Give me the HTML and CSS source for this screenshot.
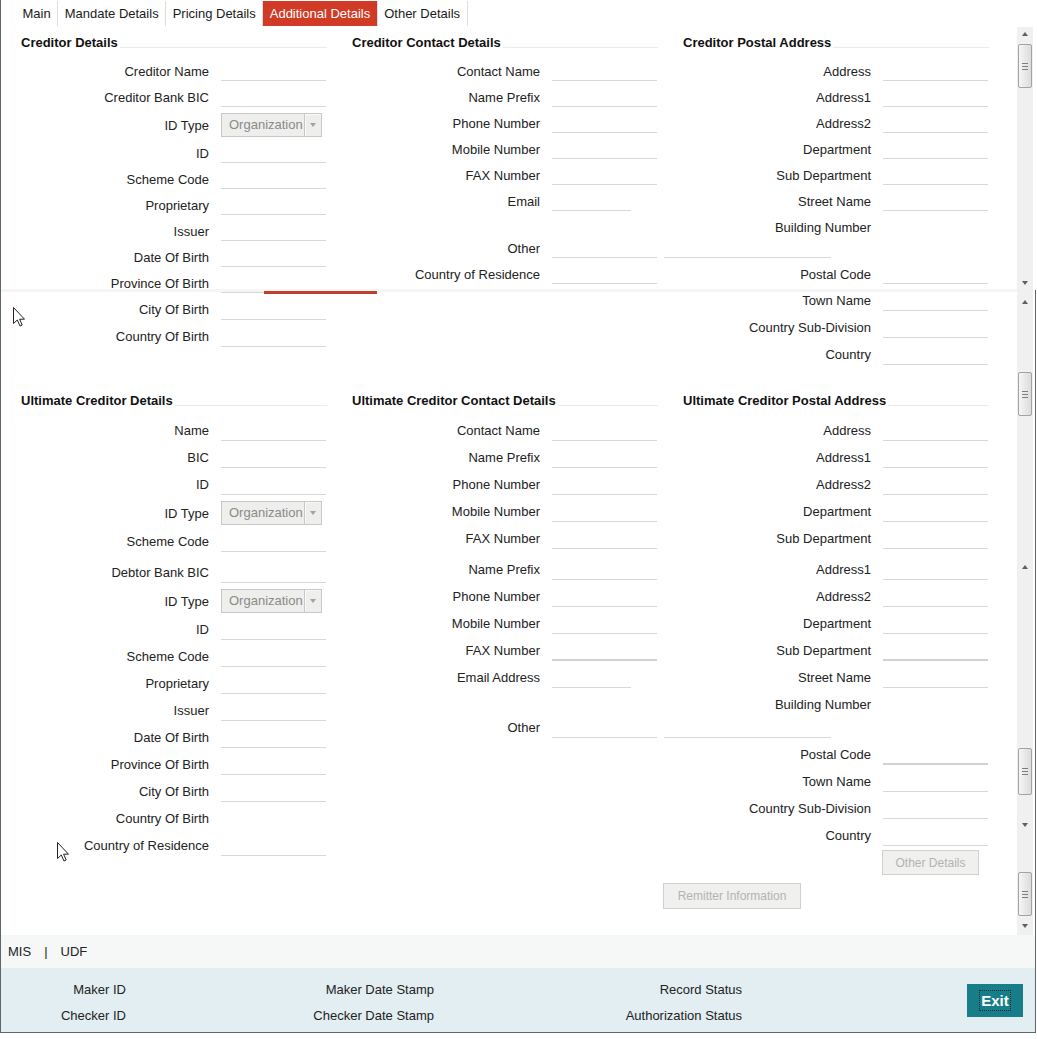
FILE: index.html
```html
<!DOCTYPE html>
<html lang="en">

<head>
    <meta charset="UTF-8">
    <title>Additional Details</title>
    <link rel="stylesheet" href="styles.css">
</head>

<body>
    <div class="screen">
        <ul class="tabs">
            <li>Main</li>
            <li>Mandate Details</li>
            <li>Pricing Details</li>
            <li class="active">Additional Details</li>
            <li>Other Details</li>
        </ul>

        <div class="workspace">
            <div class="form">
                <!-- creditor -->
                <section class="group">
                    <div class="col">
                        <div class="heading">Creditor Details</div>
                        <div class="field"><label>Creditor Name</label><input type="text"></div>
                        <div class="field"><label>Creditor Bank BIC</label><input type="text"></div>
                        <div class="field tall"><label>ID Type</label>
                            <div class="select"><span>Organization</span><i></i></div>
                        </div>
                        <div class="field"><label>ID</label><input type="text"></div>
                        <div class="field"><label>Scheme Code</label><input type="text"></div>
                        <div class="field"><label>Proprietary</label><input type="text"></div>
                        <div class="field"><label>Issuer</label><input type="text"></div>
                        <div class="field"><label>Date Of Birth</label><input type="text"></div>
                        <div class="field"><label>Province Of Birth</label><input type="text"></div>
                        <div class="field loose"><label>City Of Birth</label><input type="text"></div>
                        <div class="field loose"><label>Country Of Birth</label><input type="text"></div>
                    </div>
                    <div class="col">
                        <div class="heading">Creditor Contact Details</div>
                        <div class="field"><label>Contact Name</label><input type="text"></div>
                        <div class="field"><label>Name Prefix</label><input type="text"></div>
                        <div class="field"><label>Phone Number</label><input type="text"></div>
                        <div class="field"><label>Mobile Number</label><input type="text"></div>
                        <div class="field"><label>FAX Number</label><input type="text"></div>
                        <div class="field"><label>Email</label><input type="text" class="short"></div>
                        <div class="field gap"><label>Other</label><input type="text"><input type="text" class="long"></div>
                        <div class="field"><label>Country of Residence</label><input type="text"></div>
                    </div>
                    <div class="col">
                        <div class="heading">Creditor Postal Address</div>
                        <div class="field"><label>Address</label><input type="text"></div>
                        <div class="field"><label>Address1</label><input type="text"></div>
                        <div class="field"><label>Address2</label><input type="text"></div>
                        <div class="field"><label>Department</label><input type="text"></div>
                        <div class="field"><label>Sub Department</label><input type="text"></div>
                        <div class="field"><label>Street Name</label><input type="text"></div>
                        <div class="field"><label>Building Number</label></div>
                        <div class="field gap"><label>Postal Code</label><input type="text"></div>
                        <div class="field loose"><label>Town Name</label><input type="text"></div>
                        <div class="field loose"><label>Country Sub-Division</label><input type="text"></div>
                        <div class="field loose"><label>Country</label><input type="text"></div>
                    </div>
                </section>

                <!-- ultimate creditor -->
                <section class="group ult">
                    <div class="col">
                        <div class="heading">Ultimate Creditor Details</div>
                        <div class="field"><label>Name</label><input type="text"></div>
                        <div class="field"><label>BIC</label><input type="text"></div>
                        <div class="field"><label>ID</label><input type="text"></div>
                        <div class="field tall"><label>ID Type</label>
                            <div class="select"><span>Organization</span><i></i></div>
                        </div>
                        <div class="field"><label>Scheme Code</label><input type="text"></div>
                        <div class="field cut"><label>Debtor Bank BIC</label><input type="text"></div>
                        <div class="field tall"><label>ID Type</label>
                            <div class="select"><span>Organization</span><i></i></div>
                        </div>
                        <div class="field"><label>ID</label><input type="text"></div>
                        <div class="field"><label>Scheme Code</label><input type="text"></div>
                        <div class="field"><label>Proprietary</label><input type="text"></div>
                        <div class="field"><label>Issuer</label><input type="text"></div>
                        <div class="field"><label>Date Of Birth</label><input type="text"></div>
                        <div class="field"><label>Province Of Birth</label><input type="text"></div>
                        <div class="field"><label>City Of Birth</label><input type="text"></div>
                        <div class="field"><label>Country Of Birth</label></div>
                        <div class="field"><label>Country of Residence</label><input type="text"></div>
                    </div>
                    <div class="col">
                        <div class="heading">Ultimate Creditor Contact Details</div>
                        <div class="field"><label>Contact Name</label><input type="text"></div>
                        <div class="field"><label>Name Prefix</label><input type="text"></div>
                        <div class="field"><label>Phone Number</label><input type="text"></div>
                        <div class="field"><label>Mobile Number</label><input type="text"></div>
                        <div class="field"><label>FAX Number</label><input type="text"></div>
                        <div class="field cut"><label>Name Prefix</label><input type="text"></div>
                        <div class="field"><label>Phone Number</label><input type="text"></div>
                        <div class="field"><label>Mobile Number</label><input type="text"></div>
                        <div class="field"><label>FAX Number</label><input type="text" class="dark"></div>
                        <div class="field"><label>Email Address</label><input type="text" class="short"></div>
                        <div class="field gap"><label>Other</label><input type="text"><input type="text" class="long"></div>
                    </div>
                    <div class="col">
                        <div class="heading">Ultimate Creditor Postal Address</div>
                        <div class="field"><label>Address</label><input type="text"></div>
                        <div class="field"><label>Address1</label><input type="text"></div>
                        <div class="field"><label>Address2</label><input type="text"></div>
                        <div class="field"><label>Department</label><input type="text"></div>
                        <div class="field"><label>Sub Department</label><input type="text"></div>
                        <div class="field cut"><label>Address1</label><input type="text"></div>
                        <div class="field"><label>Address2</label><input type="text"></div>
                        <div class="field"><label>Department</label><input type="text"></div>
                        <div class="field"><label>Sub Department</label><input type="text" class="dark"></div>
                        <div class="field"><label>Street Name</label><input type="text"></div>
                        <div class="field"><label>Building Number</label></div>
                        <div class="field gap"><label>Postal Code</label><input type="text" class="dark"></div>
                        <div class="field"><label>Town Name</label><input type="text"></div>
                        <div class="field"><label>Country Sub-Division</label><input type="text"></div>
                        <div class="field"><label>Country</label><input type="text"></div>
                        <button class="btn btn-other" disabled>Other Details</button>
                    </div>
                </section>

                <div class="actions">
                    <button class="btn btn-remitter" disabled>Remitter Information</button>
                </div>
            </div>

            <div class="scrollbar">
                <div class="seg seg-1">
                    <span class="arrow up"></span>
                    <span class="thumb"></span>
                    <span class="arrow down"></span>
                </div>
                <div class="seg seg-2">
                    <span class="arrow up"></span>
                    <span class="thumb"></span>
                </div>
                <div class="seg seg-3">
                    <span class="arrow up"></span>
                    <span class="thumb"></span>
                    <span class="arrow down"></span>
                </div>
                <div class="seg seg-4">
                    <span class="thumb"></span>
                    <span class="arrow down"></span>
                </div>
            </div>

            <div class="seam"></div>
        </div>

        <div class="links">MIS<span class="sep">|</span>UDF</div>

        <div class="audit">
            <div class="audit-col">
                <div>Maker ID</div>
                <div>Checker ID</div>
            </div>
            <div class="audit-col">
                <div>Maker Date Stamp</div>
                <div>Checker Date Stamp</div>
            </div>
            <div class="audit-col">
                <div>Record Status</div>
                <div>Authorization Status</div>
            </div>
            <button class="exit"><span>Exit</span></button>
        </div>

        <svg class="pointer pointer-1" width="13" height="20" viewBox="0 0 13 20">
            <path d="M0.5 0.5 L0.5 16.5 L4.3 13 L7 19 L9.2 18 L6.6 12.2 L11.5 12.2 Z" fill="#fff" stroke="#222" stroke-width="1" stroke-linejoin="round" />
        </svg>
        <svg class="pointer pointer-2" width="13" height="20" viewBox="0 0 13 20">
            <path d="M0.5 0.5 L0.5 16.5 L4.3 13 L7 19 L9.2 18 L6.6 12.2 L11.5 12.2 Z" fill="#fff" stroke="#222" stroke-width="1" stroke-linejoin="round" />
        </svg>
    </div>
</body>

</html>
```

FILE: styles.css
```css
body {
    margin: 0;
    background: #fff;
    font-family: "Liberation Sans", Arial, sans-serif;
    font-size: 13px;
    color: #222;
}

.screen {
    position: relative;
    width: 1036px;
    box-sizing: border-box;
    border-left: 1px solid #5b676d;
    border-bottom: 1px solid #5b676d;
}

/* right frame edge only shows below the tab strip seam */
.screen::after {
    content: "";
    position: absolute;
    top: 290px;
    bottom: 0;
    right: 0;
    width: 1px;
    background: #5b676d;
}

/* Tabs */
.tabs {
    display: flex;
    height: 27px;
    margin: 0;
    padding: 0 0 0 15px;
    list-style: none;
}

.tabs li {
    height: 25px;
    margin-top: 1px;
    padding: 0 6.5px;
    line-height: 26px;
    border-right: 1px solid #dedede;
    color: #1a1a1a;
}

.tabs li.active {
    background-color: #d13b25;
    color: #fff;
}

/* Scroll pane */
.workspace {
    position: relative;
    display: flex;
    height: 908px;
    overflow: hidden;
}

.form {
    width: 1016px;
    padding-left: 20px;
    box-sizing: border-box;
}

.group {
    display: grid;
    grid-template-columns: repeat(3, 331px);
    align-items: start;
    padding: 8px 0 17px;
}

.group.ult {
    padding-bottom: 8px;
}

.heading {
    display: flex;
    width: 306px;
    height: 16px;
    line-height: 16px;
    margin-bottom: 7px;
    font-weight: bold;
    color: #111;
    white-space: nowrap;
}

.heading::after {
    content: "";
    flex: 1;
    height: 1px;
    margin: 12px 0 0 2px;
    background: #ebebeb;
}

.ult .heading {
    margin-bottom: 8px;
}

.field {
    display: flex;
    align-items: center;
    height: 26px;
}

.ult .field {
    height: 27px;
}

.field.loose {
    height: 27px;
}

.field.tall {
    height: 30px;
}

.field.cut {
    margin-top: 4px;
}

.field.gap {
    margin-top: 21px;
}

.ult .field.gap {
    margin-top: 23px;
}

.field label {
    flex: none;
    width: 188px;
    margin-right: 12px;
    text-align: right;
    white-space: nowrap;
}

.field input {
    flex: none;
    width: 105px;
    height: 20px;
    padding: 0;
    box-sizing: border-box;
    border: none;
    border-bottom: 1px solid #d8d8d8;
    background: transparent;
    font: inherit;
}

.field input.short {
    width: 79px;
}

.field input.long {
    width: 167px;
    margin-left: 7px;
}

.field input.dark {
    border-bottom: 2px solid #d2d2d2;
}

.select {
    display: flex;
    width: 101px;
    height: 24px;
    box-sizing: border-box;
    border: 1px solid #c8c8c8;
    background: #eeeeec;
    color: #8a8a8a;
}

.select span {
    flex: 1;
    padding-left: 7px;
    line-height: 22px;
}

.select i {
    display: flex;
    align-items: center;
    justify-content: center;
    width: 16px;
    border-left: 1px solid #c8c8c8;
    box-shadow: inset 1px 1px 0 #fafafa;
}

.select i::after {
    content: "";
    border-top: 4px solid #a2a2a2;
    border-left: 3.5px solid transparent;
    border-right: 3.5px solid transparent;
}

.btn {
    height: 25px;
    padding: 0;
    border: 1px solid #d0d0d0;
    background: #f0f0ee;
    color: #b3b3b3;
    font: 12px "Liberation Sans", Arial, sans-serif;
}

.btn-other {
    display: block;
    width: 97px;
    margin: 1px 0 0 199px;
}

.btn-remitter {
    width: 138px;
    height: 26px;
}

.actions {
    padding-left: 642px;
}

/* seam left over from the tab strip */
.seam {
    position: absolute;
    top: 262px;
    left: 0;
    width: 1016px;
    height: 3px;
    background: rgba(238, 238, 238, 0.6);
}

.seam::after {
    content: "";
    position: absolute;
    left: 263px;
    top: 2px;
    width: 113px;
    height: 3px;
    background: #c0402e;
}

/* Scrollbar */
.scrollbar {
    display: flex;
    flex-direction: column;
    width: 16px;
    background: #f0f0f0;
}

.seg {
    display: flex;
    flex-direction: column;
    align-items: center;
}

.seg-1 {
    height: 263px;
}

.seg-2 {
    height: 267px;
    padding-top: 5px;
    box-sizing: border-box;
}

.seg-3 {
    height: 283px;
    padding: 3px 0 8px;
    box-sizing: border-box;
}

.seg-4 {
    height: 95px;
}

.arrow {
    display: flex;
    align-items: center;
    justify-content: center;
    height: 14px;
    flex: none;
}

.arrow::after {
    content: "";
    border-left: 3.5px solid transparent;
    border-right: 3.5px solid transparent;
}

.arrow.up::after {
    border-bottom: 4px solid #5f5f5f;
}

.arrow.down::after {
    border-top: 4px solid #5f5f5f;
}

.seg .arrow.down {
    margin-top: auto;
}

.thumb {
    display: flex;
    align-items: center;
    justify-content: center;
    width: 14px;
    height: 44px;
    box-sizing: border-box;
    border: 1px solid #a3a3a3;
    border-radius: 2px;
    background: linear-gradient(to right, #f5f5f5, #dcdcdc);
}

.thumb::after {
    content: "";
    width: 6px;
    height: 7px;
    background: repeating-linear-gradient(#7d7d7d 0 1px, transparent 1px 3px);
}

.seg-1 .thumb {
    margin-top: 3px;
}

.seg-2 .thumb {
    margin-top: 63px;
}

.seg-3 .thumb {
    height: 47px;
    margin-top: 174px;
}

.seg-4 .thumb {
    margin-top: 32px;
}

.seg-4 .arrow.down {
    margin-top: 3px;
}

/* Footer */
.links {
    height: 33px;
    line-height: 33px;
    padding-left: 7px;
    background: #f6f8f8;
}

.links .sep {
    margin: 0 13px;
}

.audit {
    display: flex;
    align-items: flex-start;
    height: 64px;
    padding: 9px 13px 0 0;
    box-sizing: border-box;
    background: #e2eef1;
}

.audit-col {
    width: 308px;
}

.audit-col div {
    width: 125px;
    height: 26px;
    line-height: 26px;
    text-align: right;
    white-space: nowrap;
}

.exit {
    width: 56px;
    height: 33px;
    margin: 7px 0 0 auto;
    padding: 0;
    border: none;
    background-color: #177d89;
    color: #fff;
    font: bold 15px "Liberation Sans", Arial, sans-serif;
}

.exit span {
    padding: 1px 1px;
    outline: 1px dotted #0c2f33;
}

.pointer {
    position: absolute;
}

.pointer-1 {
    left: 12px;
    top: 307px;
}

.pointer-2 {
    left: 56px;
    top: 842px;
}
```
